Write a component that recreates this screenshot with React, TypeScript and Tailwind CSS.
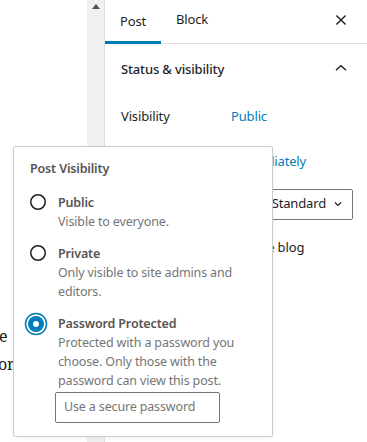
import React from 'react';

const font = { fontFamily: '"Noto Sans", "Liberation Sans", sans-serif' };

function Radio({ checked }: { checked?: boolean }) {
    if (checked) {
        return (
            <svg width="24" height="24" viewBox="0 0 24 24" className="shrink-0 -ml-1 -mt-[2px]">
                <circle cx="12" cy="12" r="10.5" fill="none" stroke="#007cba" strokeWidth="1.5" />
                <circle cx="12" cy="12" r="8" fill="#007cba" />
                <circle cx="12" cy="12" r="3" fill="#fff" />
            </svg>
        );
    }
    return (
        <svg width="16" height="16" viewBox="0 0 16 16" className="shrink-0 mt-[1px]">
            <circle cx="8" cy="8" r="7.25" fill="#fff" stroke="#1e1e1e" strokeWidth="1.5" />
        </svg>
    );
}

function Option({ label, desc, checked }: { label: string; desc: React.ReactNode; checked?: boolean }) {
    return (
        <div className="flex gap-3">
            <div className="w-4 flex justify-center pt-0">
                <Radio checked={checked} />
            </div>
            <div className="flex flex-col">
                <span className="text-[12.5px] leading-[19px] font-semibold text-[#555]">{label}</span>
                <span className="text-[12.5px] leading-[19px] text-[#757575]">{desc}</span>
            </div>
        </div>
    );
}

export default function App() {
    return (
        <div className="relative w-[367px] h-[442px] overflow-hidden bg-white flex text-[#1e1e1e] tracking-[-0.15px]" style={font}>
            {/* page content behind */}
            <div className="w-[87px] shrink-0 pt-[325px] flex flex-col gap-[6px] text-[16px] leading-[22px] text-[#1e1e1e]" style={{ fontFamily: '"Noto Serif", "Liberation Serif", serif' }}>
                <span className="-ml-[1px]">e</span>
                <span className="-ml-[2px]">or</span>
            </div>

            {/* scrollbar */}
            <div className="w-[17px] shrink-0 bg-[#f0f0f0] flex justify-center pt-[4px]">
                <svg width="8" height="5" viewBox="0 0 8 5">
                    <path d="M0 5 L4 0 L8 5 Z" fill="#505050" />
                </svg>
            </div>

            {/* sidebar */}
            <div className="flex-1 border-l border-[#e0e0e0] flex flex-col">
                <div className="h-[44px] border-b border-[#e0e0e0] flex items-stretch">
                    <div className="px-[15px] flex items-center text-[13px] border-b-[3px] border-[#007cba] pt-[2px] -mb-[1px]">Post</div>
                    <div className="px-[15px] flex items-center text-[13px] pb-[3px]">Block</div>
                    <div className="ml-auto w-[52px] flex items-center justify-center pb-[3px]">
                        <svg width="22" height="22" viewBox="0 0 24 24">
                            <path d="M7 7 L17 17 M17 7 L7 17" stroke="#1e1e1e" strokeWidth="1.5" fill="none" />
                        </svg>
                    </div>
                </div>

                <div className="flex items-center h-[52px] pl-[16px]">
                    <span className="text-[13px] font-medium">Status &amp; visibility</span>
                    <div className="ml-auto w-[52px] flex items-center justify-center pb-[4px]">
                        <svg width="22" height="22" viewBox="0 0 24 24">
                            <path d="M6.5 14.5 L12 9.5 L17.5 14.5" stroke="#1e1e1e" strokeWidth="1.5" fill="none" />
                        </svg>
                    </div>
                </div>

                <div className="flex flex-col pl-[16px] pr-[14px] text-[13px]">
                    <div className="flex items-center h-[40px] mt-[1px]">
                        <span className="w-[110px]">Visibility</span>
                        <span className="text-[#007cba]">Public</span>
                    </div>
                    <div className="flex items-center h-[40px] mt-[5px]">
                        <span className="w-[110px]">Publish</span>
                        <span className="text-[#007cba]">Immediately</span>
                    </div>
                    <div className="flex items-center h-[30px] mt-[7px] justify-between">
                        <span>Post Format</span>
                        <div className="w-[120px] h-[31px] border border-[#757575] rounded-[2px] flex items-center justify-end pl-[8px] pr-[8px] gap-[6px]">
                            <span>Standard</span>
                            <svg width="12" height="12" viewBox="0 0 24 24">
                                <path d="M6 9 L12 15 L18 9" stroke="#1e1e1e" strokeWidth="2.4" fill="none" />
                            </svg>
                        </div>
                    </div>
                    <div className="flex items-center h-[20px] mt-[19px] gap-[10px]">
                        <span className="w-4 h-4 border border-[#1e1e1e] rounded-[2px]" />
                        <span>Stick to the top of the blog</span>
                    </div>
                </div>
            </div>

            {/* visibility popover */}
            <div className="absolute left-[13px] top-[146px] w-[260px] bg-white border border-[#cccccc] rounded-[2px] shadow-[0_2px_6px_rgba(0,0,0,0.05)] pt-[12px] pl-[16px] pr-[16px] pb-[13px] flex flex-col">
                <span className="text-[12.5px] leading-[19px] font-semibold text-[#555] mb-[15px]">Post Visibility</span>
                <div className="flex flex-col gap-[13px]">
                    <Option label="Public" desc="Visible to everyone." />
                    <Option label="Private" desc={<>Only visible to site admins and<br />editors.</>} />
                    <Option
                        checked
                        label="Password Protected"
                        desc={<>Protected with a password you<br />choose. Only those with the<br />password can view this post.</>}
                    />
                </div>
                <div className="pl-[25px] mt-[2px]">
                    <div className="w-[165px] h-[31px] border border-[#757575] rounded-[2px] flex items-center px-[8px] text-[12.5px] text-[#757575]">
                        Use a secure password
                    </div>
                </div>
            </div>
        </div>
    );
}
